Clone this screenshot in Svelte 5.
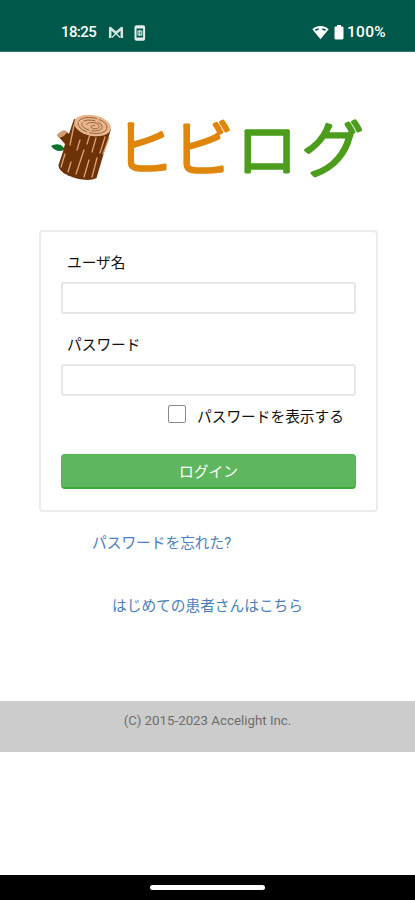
<script lang="ts">
  interface Glyph {
    char: string;
    x: number;
    y: number;
    scale: number;
    color: string;
  }

  const title: Glyph[] = [
    { char: 'ヒ', x: 115, y: 171, scale: 0.96, color: '#df860b' },
    { char: 'ビ', x: 172.5, y: 171, scale: 1, color: '#df860b' },
    { char: 'ロ', x: 236.5, y: 171.5, scale: 1, color: '#4b9d1b' },
    { char: 'グ', x: 301.5, y: 172, scale: 1.02, color: '#4b9d1b' },
  ];

  let showPassword = $state(false);
</script>

<div class="screen">
  <header class="status-bar">
    <div class="status-bar__left">
      <span class="status-bar__time">18:25</span>
      <svg class="mail-icon" width="16" height="13" viewBox="0 0 16 13" aria-hidden="true">
        <path d="M2.2 12V2l5.8 5 5.8-5v10" fill="none" stroke="#d5e5e1" stroke-width="2.5" stroke-linejoin="round" />
        <path d="M4 11.5l4-4 4 4" fill="none" stroke="#d5e5e1" stroke-width="1.3" />
      </svg>
      <svg class="card-icon" width="12" height="16" viewBox="0 0 12 16" aria-hidden="true">
        <rect x="1.5" y="1.3" width="8.6" height="13.4" rx="1" fill="none" stroke="#e3efec" stroke-width="2" />
        <path d="M2 2.5h8M2 13.5h8" stroke="#e3efec" stroke-width="2" />
        <path d="M4 6h3.8v4H4zM5.8 5v6" fill="none" stroke="#d5e5e1" stroke-width="1.2" />
      </svg>
    </div>
    <div class="status-bar__right">
      <svg width="17" height="15" viewBox="0 0 17 15" aria-hidden="true">
        <path d="M.3 4.2C5-.2 12-.2 16.7 4.2L8.5 14.3z" fill="#fff" />
        <path d="M3.4 5.4C4.5 4.6 5.6 4.1 6.8 3.9M10.2 3.9c1.2.2 2.3.7 3.4 1.5" fill="none" stroke="#00584a" stroke-width="1.5" />
      </svg>
      <svg class="battery-icon" width="10" height="15" viewBox="0 0 10 15" aria-hidden="true">
        <path d="M3 0h4v1.5h1.3c.7 0 1.2.5 1.2 1.2v10.6c0 .7-.5 1.2-1.2 1.2H1.7c-.7 0-1.2-.5-1.2-1.2V2.7c0-.7.5-1.2 1.2-1.2H3z" fill="#fff" />
      </svg>
      <span class="status-bar__level">100%</span>
    </div>
  </header>

  <main class="content">
    <svg class="logo" width="415" height="90" viewBox="0 100 415 90" role="img" aria-label="ヒビログ">
      <g class="logo__log">
        <path d="M64 148c-4-5-9-4-13-2 4 5 8 6 13 4z" fill="#08722e" />
        <path d="M57 135l8-4 10 7-5 14-6-4 1-4z" fill="#6d3207" />
        <ellipse cx="62" cy="134" rx="5" ry="2.6" transform="rotate(-32 62 134)" fill="#d69a70" />
        <path d="M74 119L58.5 165c-1 10 28 19 38 13L111 129z" fill="#6d3207" />
        <g fill="none" stroke="#dca477" stroke-width="1.3" stroke-linecap="round">
          <path d="M74 125l-4 20M80 140l-3 10M65 154l-4 13M71 162l-3 10M84 150l-8 24M90 134l-3 10M96 138l-4 14M89 160l-5 17M105 137l-5 16M97 158l-5 19M109 138l-6 16" />
        </g>
        <ellipse cx="92.5" cy="125.5" rx="18.6" ry="10.4" transform="rotate(11 92.5 125.5)" fill="#e8b68c" />
        <g fill="none" stroke="#7b4521" stroke-width=".7">
          <ellipse cx="92.5" cy="125.5" rx="14.7" ry="7.7" transform="rotate(11 92.5 125.5)" stroke-dasharray="20 2 14 1" />
          <ellipse cx="92" cy="125.5" rx="10.4" ry="5.2" transform="rotate(11 92 125.5)" stroke-dasharray="12 2" />
          <path d="M86 125c2-4 12-3 13 1s-8 3-8 1 3-2 4-1" />
        </g>
      </g>
      {#each title as glyph}
        <text
          class="logo__glyph"
          transform={`translate(${glyph.x} ${glyph.y}) scale(${glyph.scale} 1)`}
          fill={glyph.color}
          stroke={glyph.color}
        >{glyph.char}</text>
      {/each}
    </svg>

    <form class="login-card" onsubmit={(e) => e.preventDefault()}>
      <label class="login-card__label" for="username">ユーザ名</label>
      <input class="login-card__input" id="username" type="text" />
      <label class="login-card__label login-card__label--password" for="password">パスワード</label>
      <input class="login-card__input" id="password" type={showPassword ? 'text' : 'password'} />
      <label class="login-card__toggle">
        <input type="checkbox" bind:checked={showPassword} />
        <span>パスワードを表示する</span>
      </label>
      <button class="login-card__submit" type="submit">ログイン</button>
    </form>

    <a class="link link--forgot" href="#forgot">パスワードを忘れた?</a>
    <a class="link link--first" href="#first">はじめての患者さんはこちら</a>
  </main>

  <footer class="footer">(C) 2015-2023 Accelight Inc.</footer>

  <div class="gesture-bar"><span></span></div>
</div>

<style>
  :global(body) {
    margin: 0;
    background: #fff;
  }

  .screen {
    display: flex;
    flex-direction: column;
    width: 415px;
    height: 900px;
    overflow: hidden;
    background: #fff;
    color: #111;
    font-family: Roboto, 'Noto Sans CJK JP', sans-serif;
    font-size: 14.7px;
  }

  .status-bar {
    display: flex;
    justify-content: space-between;
    box-sizing: border-box;
    height: 52px;
    padding: 23px 29px 0 61px;
    border-bottom: 1px solid #327a6e;
    background: #00584a;
    color: #fff;
    font-family: Roboto, sans-serif;
    font-size: 15px;
    font-weight: 500;
    line-height: 19px;
  }

  .status-bar__left,
  .status-bar__right {
    display: flex;
    align-items: center;
    height: 19px;
  }

  .status-bar__time {
    width: 47px;
    letter-spacing: -0.6px;
  }

  .status-bar__level {
    font-size: 15.5px;
    letter-spacing: 0.3px;
  }

  .card-icon {
    margin-left: 10px;
  }

  .battery-icon {
    margin: 0 3px 0 5px;
  }

  .content {
    display: flex;
    flex-direction: column;
    height: 649px;
  }

  .logo {
    flex: none;
    margin-top: 48px;
  }

  .logo__glyph {
    font-family: 'Noto Sans CJK JP', sans-serif;
    font-size: 61px;
    font-weight: 300;
    stroke-width: 3.4px;
    stroke-linejoin: round;
    stroke-linecap: round;
  }

  .login-card {
    display: flex;
    flex-direction: column;
    box-sizing: border-box;
    width: 339px;
    height: 282px;
    margin: 40px 0 0 39px;
    padding: 20px 21px 0;
    border: 2px solid #ebebeb;
    border-radius: 4px;
  }

  .login-card__label {
    height: 20px;
    margin: 0 0 10px 5px;
    line-height: 22px;
  }

  .login-card__label--password {
    margin-top: 20px;
  }

  .login-card__input {
    box-sizing: border-box;
    width: 295px;
    height: 32px;
    margin: 0;
    margin-left: -1px;
    padding: 4px 8px;
    border: 2px solid #e6e6e6;
    border-radius: 3px;
    background: #fff;
    font: inherit;
    outline: none;
  }

  .login-card__toggle {
    display: flex;
    gap: 11px;
    height: 20px;
    margin: 9px 0 0 106px;
    line-height: 25px;
    white-space: nowrap;
  }

  .login-card__toggle input {
    appearance: none;
    box-sizing: border-box;
    width: 18px;
    height: 18px;
    margin: 0;
    border: 1.5px solid #8a8a8a;
    border-radius: 2px;
    background: #fff;
  }

  .login-card__submit {
    box-sizing: border-box;
    width: 295px;
    height: 35px;
    margin: 29px 0 0 -1px;
    padding: 0 0 2px;
    border: 1px solid #52b351;
    border-bottom: 2px solid #3aa93a;
    border-radius: 4px;
    background: #5eb75e;
    color: #fff;
    font: inherit;
  }

  .link {
    height: 20px;
    color: #4a80bd;
    line-height: 20px;
    text-decoration: none;
  }

  .link--forgot {
    margin: 21px 0 0 92px;
  }

  .link--first {
    margin: 43px 0 0 112px;
  }

  .footer {
    box-sizing: border-box;
    height: 51px;
    padding-top: 10px;
    background: #ccc;
    color: #6c6c6c;
    font-size: 13.3px;
    line-height: 19px;
    text-align: center;
  }

  .gesture-bar {
    display: flex;
    justify-content: center;
    box-sizing: border-box;
    height: 25px;
    margin-top: auto;
    padding-top: 10px;
    background: #000;
  }

  .gesture-bar span {
    width: 115px;
    height: 5px;
    border-radius: 3px;
    background: #fff;
  }
</style>
